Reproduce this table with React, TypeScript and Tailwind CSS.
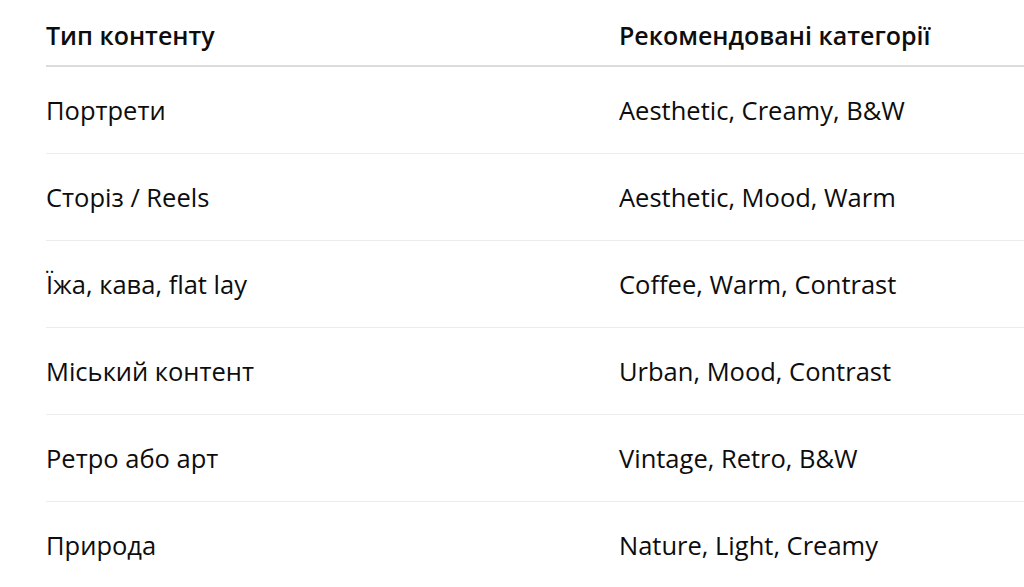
import React from 'react';

const rows = [
  ['Портрети', 'Aesthetic, Creamy, B&W'],
  ['Сторіз / Reels', 'Aesthetic, Mood, Warm'],
  ['Їжа, кава, flat lay', 'Coffee, Warm, Contrast'],
  ['Міський контент', 'Urban, Mood, Contrast'],
  ['Ретро або арт', 'Vintage, Retro, B&W'],
  ['Природа', 'Nature, Light, Creamy'],
];

const App = () => {
  return (
    <div className="w-[1024px] h-[587px] overflow-hidden bg-white pl-[46px] text-[#0d0d0d] font-['Open_Sans',sans-serif]">
      <div className="w-[1100px]">
        <div className="grid grid-cols-[573px_1fr] h-[67px] pt-[6px] items-center border-b-2 border-[#dcdcdc] text-[25px] font-semibold">
          <div>Тип контенту</div>
          <div>Рекомендовані категорії</div>
        </div>
        {rows.map(([type, cats], i) => (
          <div
            key={type}
            className={
              'grid grid-cols-[573px_1fr] h-[87px] items-center text-[25.5px] ' +
              (i < rows.length - 1 ? 'border-b border-[#ececec]' : '')
            }
          >
            <div>{type}</div>
            <div>{cats}</div>
          </div>
        ))}
      </div>
    </div>
  );
};

export default App;
